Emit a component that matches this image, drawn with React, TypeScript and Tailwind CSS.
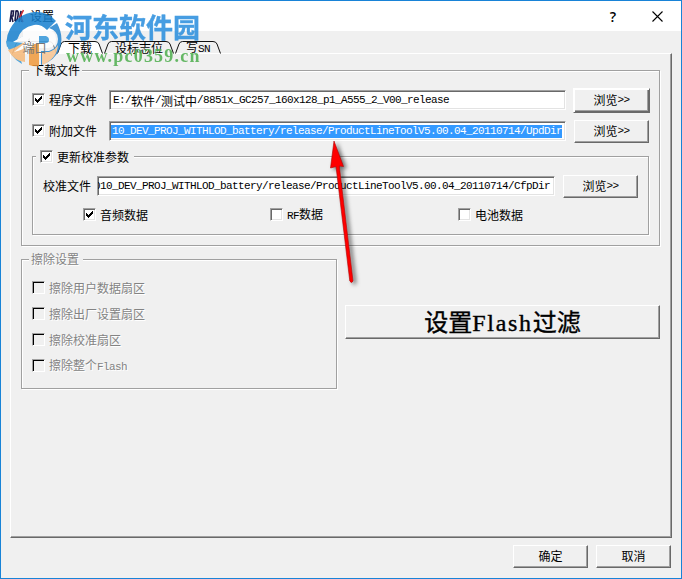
import { Fragment, useState } from 'react';
import type { ReactNode } from 'react';
import clsx from 'clsx';

const LATIN = /([\x20-\x7e]+)/;

// Latin glyphs take exactly half the width of a Chinese one
function Mixed({ text, large = false }: { text: string; large?: boolean }) {
  return (
    <>
      {text.split(LATIN).map((part, index) =>
        LATIN.test(part) ? (
          <span
            key={index}
            className={clsx(
              large
                ? "font-['Liberation_Serif',serif] text-[24px] tracking-[1.7px]"
                : "font-['Liberation_Mono',monospace] text-[11px] tracking-[-0.6px]"
            )}
          >
            {part}
          </span>
        ) : (
          <Fragment key={index}>{part}</Fragment>
        )
      )}
    </>
  );
}

interface CheckProps {
  label: string;
  defaultChecked?: boolean;
  disabled?: boolean;
  className?: string;
}

function Check({ label, defaultChecked = false, disabled = false, className }: CheckProps) {
  const [checked, setChecked] = useState(defaultChecked);

  return (
    <button
      type="button"
      role="checkbox"
      aria-checked={checked}
      disabled={disabled}
      onClick={() => setChecked(!checked)}
      className={clsx('flex h-[13px] items-center whitespace-nowrap leading-[13px]', className)}
    >
      <span
        className={clsx(
          'mr-1 block h-[13px] w-[13px] shrink-0 border border-t-[#a0a0a0] border-l-[#a0a0a0] border-r-white border-b-white',
          disabled
            ? 'bg-[#f0f0f0] shadow-[inset_1px_1px_0_#000]'
            : 'bg-white shadow-[inset_1px_1px_0_#696969,inset_-1px_-1px_0_#e3e3e3]'
        )}
      >
        {checked && (
          <svg viewBox="0 0 11 11" className="h-[11px] w-[11px]" shapeRendering="crispEdges">
            <path d="M2 4h1v1h1v1h1v-1h1v-1h1v-1h1v-1h1v3h-1v1h-1v1h-1v1h-1v1h-1v-1h-1v-1h-1z" />
          </svg>
        )}
      </span>
      <span className={clsx(disabled && 'text-[#838383] [text-shadow:1px_1px_0_#fff]')}>
        <Mixed text={label} />
      </span>
    </button>
  );
}

function PushButton({ children, className }: { children: ReactNode; className?: string }) {
  return (
    <button
      type="button"
      className={clsx(
        'flex shrink-0 items-center justify-center border border-t-white border-l-white border-r-[#696969] border-b-[#696969] bg-[#f0f0f0] pb-px shadow-[inset_-1px_-1px_0_#a0a0a0] whitespace-nowrap',
        className
      )}
    >
      {children}
    </button>
  );
}

function PathField({ value, className }: { value: string; className?: string }) {
  return (
    <div
      className={clsx(
        'flex h-5 shrink-0 items-center overflow-hidden border border-t-[#a0a0a0] border-l-[#a0a0a0] border-r-white border-b-white bg-white leading-[13px] whitespace-nowrap shadow-[inset_1px_1px_0_#696969,inset_-1px_-1px_0_#e3e3e3]',
        className
      )}
    >
      <Mixed text={value} />
    </div>
  );
}

function GroupBox({ children, className }: { children: ReactNode; className?: string }) {
  return (
    <div
      className={clsx(
        'flex flex-col border border-[#a0a0a0] shadow-[1px_1px_0_#fff,inset_1px_1px_0_#fff]',
        className
      )}
    >
      {children}
    </div>
  );
}

interface TabProps {
  label: string;
  active?: boolean;
  muted?: boolean;
  className: string;
  width: number;
}

function Tab({ label, active = false, muted = false, className, width }: TabProps) {
  return (
    <div className={clsx('relative flex h-3 shrink-0 items-center justify-center', className)}>
      <svg
        viewBox={`0 0 ${width} 13`}
        className="absolute inset-x-0 top-0 h-[13px] w-full"
        fill={active ? '#fff' : 'none'}
        stroke={muted ? '#777' : '#111'}
      >
        <path d={`M0.5 12.5L4 3Q5 .5 7.5 .5H${width - 8}Q${width - 5} .5 ${width - 4} 3L${width - 0.5} 12.5`} />
      </svg>
      <span
        className={clsx(
          'relative mt-px whitespace-nowrap leading-3',
          muted && 'z-10 text-[#777]'
        )}
      >
        <Mixed text={label} />
      </span>
    </div>
  );
}

function RdaIcon() {
  return (
    <svg viewBox="0 0 15 14" className="h-[14px] w-[15px]" fill="none" strokeWidth="1.6">
      <path d="M1 13L2.5 2H4.5L4 7H2.5L4 13" stroke="#1b1b4b" />
      <path d="M6 12L7 2Q10 1 9 7T6 12" stroke="#1b1b4b" />
      <path d="M10 13L12 2L12.5 13" stroke="#1b1b4b" />
      <path d="M14.5 1L11 8L14 13" stroke="#d03038" />
    </svg>
  );
}

function SiteBadge() {
  return (
    <div className="pointer-events-none absolute top-[10px] left-[4px] flex opacity-85">
      <svg viewBox="0 0 58 56" className="h-14 w-[58px] shrink-0">
        <path d="M5 18Q13 3 29 1Q43 0 51 10L42 19Q36 13 29 14Q16 16 12 29L2 36Q0 27 5 18Z" fill="#1680cf" />
        <path d="M1 30Q4 46 17 53Q14 44 17 37L22 34V23L8 31Z" fill="#3299db" />
        <path d="M18 19H43Q51 20 51 28T43 37H34V53H25V27L18 31Z" fill="#fff" />
        <path d="M34 25H41Q44 26 44 29T41 32H34Z" fill="#3699db" />
        <path d="M52 12Q59 25 55 37Q50 50 36 54V40H44Q53 37 53 28Q53 20 44 17Z" fill="#2384cf" />
        <path d="M3 39Q13 36 20 30V51Q9 50 3 39Z" fill="#f6b878" />
        <path d="M29 33H34V55Q29 56 24 54V39Z" fill="#f09a3c" />
        <path d="M37 41H44Q50 39 53 34Q52 48 37 54Z" fill="#f8c490" />
        <path d="M8 31L23 22V34Q19 39 9 41L20 32Z" fill="#fff" />
      </svg>
      <div className="ml-[2px] w-[143px]">
        <div className="mt-px h-[34px] font-['Noto_Sans_CJK_SC',sans-serif] text-[27px] leading-[30px] font-bold whitespace-nowrap text-[#278ddd] [-webkit-text-stroke:0.4px_#278ddd]">
          河东软件园
        </div>
        <div className="pl-px font-['Liberation_Serif',serif] text-[18px] leading-5 font-bold tracking-[1.2px] whitespace-nowrap text-[#4dae4d]">
          www.pc0359.cn
        </div>
      </div>
    </div>
  );
}

function PointerArrow() {
  return (
    <svg
      viewBox="0 0 32 150"
      className="pointer-events-none absolute top-[138px] left-[326px] h-[150px] w-8 drop-shadow-[3px_2px_2px_rgba(0,0,0,0.55)]"
    >
      <path
        d="M7 2L16.5 27.5L12.3 27L26 142Q24.5 145 22.8 142L9 27.6L3.5 29Z"
        fill="#fe0000"
        stroke="#b00000"
        strokeWidth="0.6"
      />
    </svg>
  );
}

const eraseOptions = ['擦除用户数据扇区', '擦除出厂设置扇区', '擦除校准扇区', '擦除整个Flash'];

const releasePath = '10_DEV_PROJ_WITHLOD_battery/release/ProductLineToolV5.00.04_20110714/';

export default function App() {
  return (
    <div className="relative flex h-[579px] w-[682px] flex-col overflow-hidden border border-[#1883d7] bg-[#f0f0f0] font-['Noto_Sans_CJK_SC',sans-serif] text-[12px] leading-3 text-black">
      {/* Title bar */}
      <header className="flex h-[30px] shrink-0 items-center bg-white pl-[8px]">
        <RdaIcon />
        <span className="ml-[6px]">设置</span>
        <span className="mt-px ml-auto w-[10px] text-center font-['Open_Sans',sans-serif] text-[14px] font-semibold">
          ?
        </span>
        <svg viewBox="0 0 11 11" className="mr-[18px] ml-[34px] h-[11px] w-[11px]" stroke="#000" strokeWidth="1.1">
          <path d="M.5 .5L10.5 10.5M10.5 .5L.5 10.5" />
        </svg>
      </header>

      {/* Tabs */}
      <nav className="mt-[10px] flex h-3 shrink-0 pl-[11px]">
        <Tab label="端口" muted width={45} className="w-[45px]" />
        <Tab label="下载" active width={46} className="w-[46px]" />
        <Tab label="设标志位" width={70} className="ml-px w-[70px]" />
        <Tab label="写SN" width={46} className="ml-px w-[46px]" />
      </nav>

      <main className="ml-[9px] flex h-[485px] w-[662px] shrink-0 flex-col border border-t-white border-l-white border-r-[#696969] border-b-[#696969] pl-[10px] shadow-[inset_-1px_-1px_0_#a0a0a0]">
        {/* Download files */}
        <GroupBox className="mt-4 h-[176px] w-[639px] shrink-0">
          <div className="-mt-[7px] mb-px ml-[7px] h-3 w-[53px] bg-[#f0f0f0] pl-[3px]">下载文件</div>

          <div className="mt-[11px] flex h-[25px] items-start pl-[10px]">
            <Check label="程序文件" defaultChecked className="mt-[5px] w-[77px]" />
            <PathField
              value="E:/软件/测试中/8851x_GC257_160x128_p1_A555_2_V00_release"
              className="mt-[2px] w-[457px] pl-[3px]"
            />
            <PushButton className="ml-[7px] h-[25px] w-[77px] border-t-[#696969] border-l-[#696969] shadow-[inset_1px_1px_0_#fff,inset_-1px_-1px_0_#696969,inset_-2px_-2px_0_#a0a0a0]">
              <Mixed text="浏览>>" />
            </PushButton>
          </div>

          <div className="mt-[7px] flex h-[23px] items-start pl-[10px]">
            <Check label="附加文件" defaultChecked className="mt-1 w-[77px]" />
            <div className="mt-px flex h-5 w-[457px] shrink-0 items-center overflow-hidden border border-t-[#a0a0a0] border-l-[#a0a0a0] border-r-white border-b-white bg-white pl-px leading-[13px] whitespace-nowrap shadow-[inset_1px_1px_0_#696969,inset_-1px_-1px_0_#e3e3e3]">
              <span className="flex h-[13px] w-[451px] items-start bg-[#3399ff] pl-px text-white">
                <Mixed text={releasePath + 'UpdDir'} />
              </span>
            </div>
            <PushButton className="ml-[8px] h-[23px] w-[75px]">
              <Mixed text="浏览>>" />
            </PushButton>
          </div>

          {/* Calibration parameters */}
          <GroupBox className="mt-[13px] ml-[10px] h-[79px] w-[617px] shrink-0">
            <div className="-mt-[7px] ml-[3px] w-[98px] bg-[#f0f0f0] pl-1">
              <Check label="更新校准参数" defaultChecked />
            </div>
            <div className="mt-3 flex h-[23px] items-start pl-[10px]">
              <span className="mt-[5px] w-[54px] shrink-0">校准文件</span>
              <PathField value={'0' + releasePath + 'CfpDir'} className="mt-px w-[458px] justify-end pr-1" />
              <PushButton className="ml-[8px] h-[23px] w-[75px]">
                <Mixed text="浏览>>" />
              </PushButton>
            </div>
            <div className="mt-[10px] grid grid-cols-[187px_188px_auto] pl-[50px]">
              <Check label="音频数据" defaultChecked />
              <Check label="RF数据" />
              <Check label="电池数据" />
            </div>
          </GroupBox>
        </GroupBox>

        <div className="mt-[13px] flex items-start">
          {/* Erase settings */}
          <GroupBox className="h-[130px] w-[316px] shrink-0">
            <div className="-mt-[7px] mb-px ml-[7px] h-3 w-[54px] bg-[#f0f0f0] pl-[2px] text-[#838383] [text-shadow:1px_1px_0_#fff]">
              擦除设置
            </div>
            <div className="mt-[15px] flex flex-col gap-[13px] pl-[10px]">
              {eraseOptions.map((option) => (
                <Check key={option} label={option} disabled />
              ))}
            </div>
          </GroupBox>
          <PushButton className="mt-[46px] ml-[8px] h-[34px] w-[315px] pb-[3px] text-[24px] leading-6">
            <span className="[-webkit-text-stroke:0.4px_#000]">
              <Mixed text="设置Flash过滤" large />
            </span>
          </PushButton>
        </div>
      </main>

      {/* Dialog actions */}
      <footer className="mt-[7px] flex shrink-0 justify-end gap-2 pr-[10px]">
        <PushButton className="h-[23px] w-[75px]">确定</PushButton>
        <PushButton className="h-[23px] w-[75px]">取消</PushButton>
      </footer>

      <SiteBadge />
      <PointerArrow />
    </div>
  );
}
